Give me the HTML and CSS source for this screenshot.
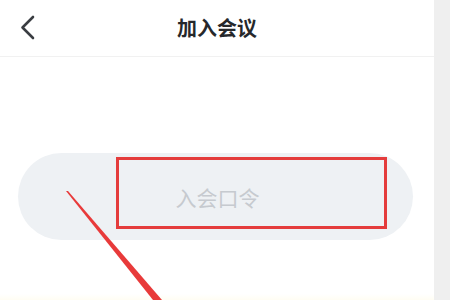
FILE: index.html
```html
<!DOCTYPE html>
<html lang="zh">
<head>
<meta charset="utf-8">
<title>加入会议</title>
<link rel="stylesheet" href="styles.css">
</head>
<body>
<div class="page">
  <main class="screen">
    <header class="nav">
      <button class="back" aria-label="返回">
        <svg width="16" height="26" viewBox="0 0 16 26"><path d="M13 2 L2.5 12.5 L13 23" fill="none" stroke="#3a3d42" stroke-width="2.6" stroke-linecap="round" stroke-linejoin="round"/></svg>
      </button>
      <h1 class="title">加入会议</h1>
      <span class="spacer"></span>
    </header>
    <section class="content">
      <div class="field">
        <span class="placeholder">入会口令</span>
      </div>
    </section>
    <div class="bottom-tint"></div>
  </main>
  <aside class="side"></aside>
  <div class="mark-box"></div>
  <svg class="mark-arrow" width="450" height="300" viewBox="0 0 450 300"><polygon points="66,191 68,191 162,300 153,300" fill="#e83a3a"/></svg>
</div>
</body>
</html>
```
FILE: styles.css
```css
html, body {
  margin: 0;
  padding: 0;
}
body {
  width: 450px;
  height: 300px;
  overflow: hidden;
  font-family: "Noto Sans CJK SC", "Noto Sans", sans-serif;
  background: #ffffff;
}
.page {
  position: relative;
  display: flex;
  width: 450px;
  height: 300px;
}
.screen {
  width: 434px;
  height: 300px;
  background: #ffffff;
  display: flex;
  flex-direction: column;
}
.side {
  flex: 1;
  background: #efefef;
}
.nav {
  height: 56px;
  border-bottom: 1px solid #f1f1f1;
  display: grid;
  grid-template-columns: 1fr auto 1fr;
  align-items: center;
}
.back {
  justify-self: start;
  margin-left: 20px;
  padding: 0;
  border: 0;
  background: none;
  display: flex;
  margin-top: 0;
}
.title {
  margin: 0;
  font-size: 20px;
  font-weight: 700;
  color: #26282b;
  line-height: 56px;
  letter-spacing: 0;
}
.content {
  padding: 96px 21px 0 18px;
}
.field {
  height: 87px;
  border-radius: 44px;
  background: #eef1f4;
  display: flex;
  align-items: center;
  justify-content: center;
}
.placeholder {
  font-size: 21px;
  color: #c6cacf;
  margin-left: 4px;
  margin-top: 0;
}
.bottom-tint {
  margin-top: auto;
  height: 6px;
  background: linear-gradient(#ffffff, #fffdf3);
}
.mark-box {
  position: absolute;
  left: 116px;
  top: 157px;
  width: 265px;
  height: 66px;
  border: 3px solid #e43c3c;
}
.mark-arrow {
  position: absolute;
  left: 0;
  top: 0;
  pointer-events: none;
}
```
